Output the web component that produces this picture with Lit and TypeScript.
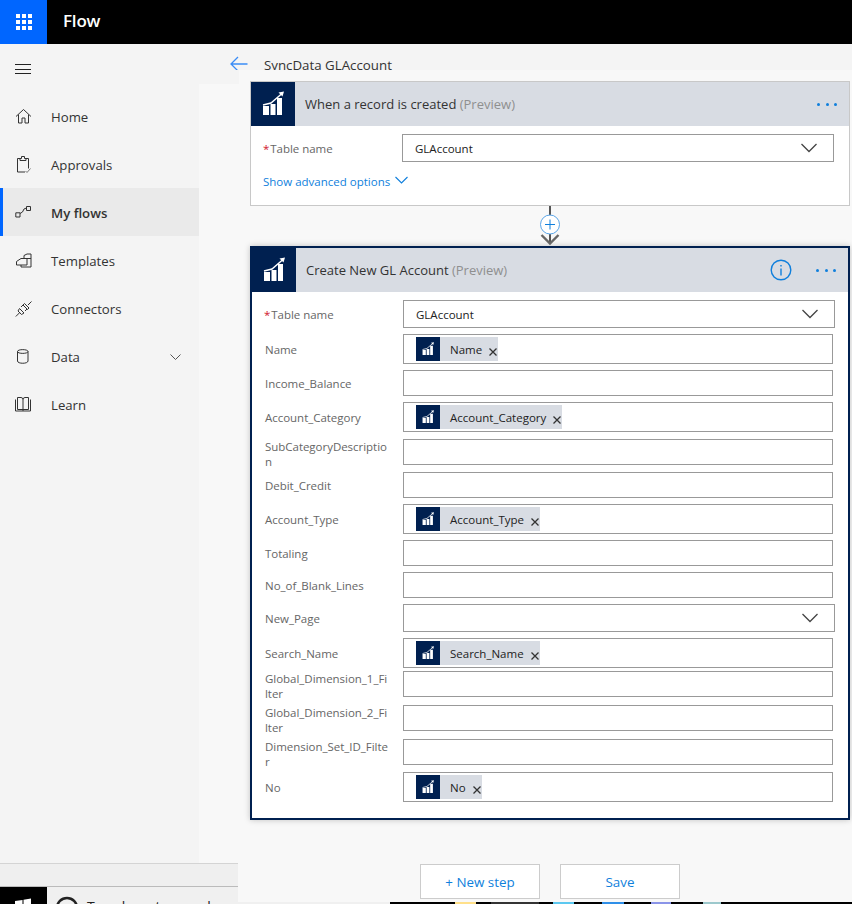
import { LitElement, html, css, svg } from "lit";
import { customElement } from "lit/decorators.js";

const navIcons: Record<string, unknown> = {
  home: svg`<path d="M1 8.5 8.5 1.5 16 8.5M3.5 6.5V15H7V10H10V15H13.5V6.5"/>`,
  approvals: svg`<path d="M13.5 12.5V2.5H11M5 2.5H2.5V16H10M5 4.5V2.5H6.5V.5H9.5V2.5H11V4.5Z"/><path d="M10.5 15 12 16.5 15.5 12.5" stroke="#777"/>`,
  flows: svg`<path d="M.8 8.8H5V13H.8ZM11.5 2.5H15.5V6.5H11.5ZM5 9.5 7.5 8 9 5 11.5 4"/>`,
  templates: svg`<path d="M1.5 9.5 6 6.5H9V3.5L12 2H16V15H6V13H1.5ZM9 6.5H12V13H6M12 6.5H16"/>`,
  connectors: svg`<path d="M.8 16.5 4.5 12.8M13 5 16.5 1.5M4.5 8.5 9 13 6.5 14.5 3 11ZM8 5 12 9M9.5 3.5 14 8 12.5 9.5 8 5ZM6 7 8 5M10 11 12 9"/>`,
  data: svg`<path d="M2.5 3.5C2.5 1 13 1 13 3.5V13C13 16 2.5 16 2.5 13ZM2.5 3.5C2.5 6 13 6 13 3.5"/>`,
  learn: svg`<path d="M.5 3.5V15H15.5V3.5M2.5 1.5V13.5H8V15M13.5 1.5V13.5H8M2.5 1.5H6Q8 1.5 8 3.5V13.5M13.5 1.5H10Q8 1.5 8 3.5"/>`,
};

const navItems = [
  { id: "home", label: "Home" },
  { id: "approvals", label: "Approvals" },
  { id: "flows", label: "My flows", active: true },
  { id: "templates", label: "Templates" },
  { id: "connectors", label: "Connectors" },
  { id: "data", label: "Data", more: true },
  { id: "learn", label: "Learn" },
];

type Row = { label: string; h: number; gap: number; chip?: boolean; select?: boolean; value?: string; req?: boolean; two?: boolean };

const rows: Row[] = [
  { label: "Table name", h: 28, gap: 8, select: true, value: "GLAccount", req: true },
  { label: "Name", h: 30, gap: 6, chip: true },
  { label: "Income_Balance", h: 26, gap: 6 },
  { label: "Account_Category", h: 30, gap: 6, chip: true },
  { label: "SubCategoryDescriptio\nn", h: 26, gap: 7, two: true },
  { label: "Debit_Credit", h: 26, gap: 7 },
  { label: "Account_Type", h: 30, gap: 6, chip: true },
  { label: "Totaling", h: 26, gap: 6 },
  { label: "No_of_Blank_Lines", h: 26, gap: 6 },
  { label: "New_Page", h: 28, gap: 6, select: true },
  { label: "Search_Name", h: 30, gap: 6, chip: true },
  { label: "Global_Dimension_1_Fi\nlter", h: 26, gap: 3, two: true },
  { label: "Global_Dimension_2_Fi\nlter", h: 26, gap: 8, two: true },
  { label: "Dimension_Set_ID_Filte\nr", h: 26, gap: 8, two: true },
  { label: "No", h: 30, gap: 7, chip: true },
];

const osSegments = [
  { w: 152, c: "#f0f0f0" }, { w: 65, c: "#000" }, { w: 21, c: "#ffe08a" }, { w: 15, c: "#000" },
  { w: 48, c: "#333" }, { w: 14, c: "#000" }, { w: 21, c: "#5cc8f0" }, { w: 28, c: "#000" },
  { w: 22, c: "#2f8fe8" }, { w: 27, c: "#000" }, { w: 20, c: "#8a94e8" }, { w: 32, c: "#000" },
  { w: 18, c: "#9cc8cc" }, { w: 131, c: "#000" },
];

const chartIcon = svg`<path d="M12 24H18V33H12ZM19.5 22H24.5V33H19.5ZM26 16H31V33H26Z" fill="#fff"/><path d="M12 23 20 21 31 11.5" fill="none" stroke="#fff" stroke-width="1.4"/><path d="M33 9.5 27.5 10.5 31.5 14.5Z" fill="#fff"/>`;

@customElement("app-root")
export class AppRoot extends LitElement {
  static styles = css`
    :host { display: block; position: relative; width: 852px; height: 904px; overflow: hidden; background: #f8f8f8;
      font-family: "Open Sans", "Noto Sans", sans-serif; color: #333; }
    * { box-sizing: border-box; }
    .top { height: 44px; background: #000; display: flex; align-items: center; color: #fff; }
    .waffle { width: 47px; height: 44px; background: #0066ff; display: flex; align-items: center; justify-content: center; }
    .waffle-grid { display: grid; grid-template-columns: repeat(3, 4px); grid-auto-rows: 4px; gap: 2px; }
    .waffle-grid i { background: #fff; display: block; }
    .brand { margin: 0 0 3px 16px; font-size: 17px; font-weight: 600; letter-spacing: -0.2px; }
    .body { display: flex; height: 860px; }
    .side { width: 199px; flex: none; background: #f4f4f4; }
    .burger { height: 48px; padding: 20px 0 0 15px; }
    .burger i { display: block; width: 16px; height: 1px; background: #222; margin-bottom: 3.5px; }
    .nav { display: flex; align-items: center; height: 48px; padding: 2px 0 0 15px; font-size: 13.2px; color: #333; }
    .nav svg { width: 18px; height: 18px; flex: none; margin-right: 18px; fill: none; stroke: #333; stroke-width: 1; }
    .nav.active { background: #eaeaea; border-left: 3px solid #0066ff; padding-left: 12px; font-weight: 600; }
    .nav .more { margin-left: auto; margin-right: 18px; width: 11px; height: 6px; stroke-width: 1; stroke: #555; }
    .main { flex: 1; min-width: 0; position: relative; }
    .hdr { height: 26px; background: #f4f4f4; overflow: hidden; display: flex; align-items: flex-start; padding: 11px 0 0 31px; position: relative; }
    .notch { position: absolute; left: 0; top: 26px; width: 40px; height: 14px; background: #f4f4f4; }
    .back { width: 18px; height: 16px; fill: none; stroke: #3a8cf5; stroke-width: 1.3; margin-top: 1px; margin-right: 16px; flex: none; }
    .title { font-size: 13.3px; line-height: 20px; color: #333; }
    .canvas { width: 600px; margin-left: 51px; padding-top: 11px; }
    .card { background: #fff; border: 1px solid #c8c8c8; }
    .card.c1 { height: 125px; }
    .card.c2 { height: 574px; border: 2px solid #002050; box-shadow: 0 0 6px rgba(0,0,0,.22); }
    .head { height: 44px; background: #d8dce3; display: flex; align-items: center; }
    .head-ic { width: 44px; height: 44px; background: #002050; flex: none; }
    .head-ic svg { width: 44px; height: 44px; display: block; }
    .head-t { margin-left: 10px; font-size: 13px; color: #333; flex: 1; }
    .head-t span { color: #8f8f8f; }
    .dots { display: flex; gap: 5.3px; margin-right: 12px; }
    .dots i { width: 3px; height: 3px; border-radius: 50%; background: #0f7fdc; display: block; }
    .info { width: 22px; height: 22px; margin-right: 24px; fill: none; stroke: #0f7fdc; stroke-width: 1.4; }
    .row { display: flex; align-items: center; padding-left: 13px; }
    .lab { width: 138px; flex: none; font-size: 11.5px; line-height: 15px; letter-spacing: -0.03px; color: #666; white-space: pre-line; }
    .lab.two { height: 26px; }
    .lab.req { margin-left: -1px; width: 139px; }
    .lab b { color: #d0142c; font-weight: 400; margin-right: 1px; }
    .inp { border: 1px solid #999; background: #fff; display: flex; align-items: center; font-size: 11.5px; color: #222; padding-left: 12px; width: 430px; position: relative; }
    .inp.sel { width: 432px; }
    .chev { position: absolute; right: 16px; top: 8px; width: 16px; height: 10px; fill: none; stroke: #444; stroke-width: 1.3; }
    .chip { display: flex; align-items: center; height: 24px; background: #d8dce3; }
    .chip-ic { width: 24px; height: 24px; background: #002050; flex: none; margin-right: 10px; }
    .chip-ic svg { width: 24px; height: 24px; display: block; }
    .chip-t { font-size: 11.5px; color: #222; }
    .chip-x { width: 8px; height: 8px; margin: 6px 1px 0 7px; fill: none; stroke: #333; stroke-width: 1.3; }
    .adv { display: flex; align-items: center; padding-left: 12px; margin-top: 12px; font-size: 11.5px; color: #0f7fdc; }
    .adv svg { width: 13px; height: 8px; margin: -3px 0 0 5px; fill: none; stroke: #0f7fdc; stroke-width: 1.1; }
    .c1 .row { margin-top: 8px; }
    .c1 .inp { width: 432px; }
    .conn { height: 40px; display: block; margin: 0 auto; width: 40px; }
    .btns { display: flex; justify-content: center; gap: 20px; margin-top: 44px; }
    .btn { width: 120px; height: 35px; background: #fff; border: 1px solid #ccc; color: #0f7fdc; font-size: 13.4px; display: flex; align-items: center; justify-content: center; }
    .dock { position: absolute; left: 0; bottom: 0; width: 238px; height: 41px; background: #efefef; border-top: 1px solid #d4d4d4; }
    .search { margin-top: 22px; height: 18px; border-top: 1px solid #bbb; background: #f0f0f0; display: flex; overflow: hidden; }
    .win { width: 47px; height: 18px; background: #000; flex: none; padding: 11px 0 0 15px; }
    .win svg { width: 16px; height: 16px; display: block; fill: #fff; }
    .lens { width: 24px; height: 24px; margin: 9px 0 0 8px; flex: none; fill: none; stroke: #222; stroke-width: 2.6; }
    .ph { font-size: 14px; line-height: 18px; margin: 11px 0 0 8px; color: #222; white-space: nowrap; }
    .os { position: absolute; left: 238px; bottom: 0; height: 2px; display: flex; width: 614px; }
    .os i { display: block; height: 2px; flex: none; }
  `;

  private chip(label: string) {
    return html`<div class="chip">
      <div class="chip-ic"><svg viewBox="0 0 44 44">${chartIcon}</svg></div>
      <span class="chip-t">${label}</span>
      <svg class="chip-x" viewBox="0 0 8 8"><path d="M.5.5 7.5 7.5M7.5.5.5 7.5"/></svg>
    </div>`;
  }

  private chevron() {
    return html`<svg class="chev" viewBox="0 0 16 10"><path d="M.5 1 8 8.5 15.5 1"/></svg>`;
  }

  private renderRow(r: Row) {
    const name = r.label.replace("\n", "");
    return html`<div class="row" style="margin-top:${r.gap}px">
      <div class="lab ${r.two ? "two" : ""} ${r.req ? "req" : ""}">${r.req ? html`<b>*</b>` : ""}${r.label}</div>
      <div class="inp ${r.select ? "sel" : ""}" style="height:${r.h}px">
        ${r.chip ? this.chip(name) : r.value ?? ""}
        ${r.select ? this.chevron() : ""}
      </div>
    </div>`;
  }

  render() {
    return html`
      <div class="top">
        <div class="waffle"><div class="waffle-grid">${Array.from({ length: 9 }, () => html`<i></i>`)}</div></div>
        <div class="brand">Flow</div>
      </div>
      <div class="body">
        <aside class="side">
          <div class="burger"><i></i><i></i><i></i></div>
          ${navItems.map(
            (n) => html`<div class="nav ${n.active ? "active" : ""}">
              <svg viewBox="0 0 18 18">${navIcons[n.id]}</svg>
              <span>${n.label}</span>
              ${n.more ? html`<svg class="more" viewBox="0 0 11 6"><path d="M.5.5 5.5 5.5 10.5.5"/></svg>` : ""}
            </div>`
          )}
        </aside>
        <main class="main">
          <div class="hdr">
            <svg class="back" viewBox="0 0 18 16"><path d="M8 1 1 8 8 15M1 8H17.5"/></svg>
            <div class="title">SyncData GLAccount</div>
          </div>
          <div class="notch"></div>
          <div class="canvas">
            <section class="card c1">
              <div class="head">
                <div class="head-ic"><svg viewBox="0 0 44 44">${chartIcon}</svg></div>
                <div class="head-t">When a record is created <span>(Preview)</span></div>
                <div class="dots"><i></i><i></i><i></i></div>
              </div>
              <div class="row">
                <div class="lab req"><b>*</b>Table name</div>
                <div class="inp" style="height:28px">GLAccount${this.chevron()}</div>
              </div>
              <div class="adv">Show advanced options
                <svg viewBox="0 0 13 8"><path d="M.5 1 6.5 7 12.5 1"/></svg>
              </div>
            </section>
            <svg class="conn" viewBox="0 0 40 40">
              <path d="M20 0V10M20 28V38" stroke="#555" stroke-width="2" fill="none"/>
              <path d="M11.5 29 20 37.5 28.5 29" stroke="#666" stroke-width="2.4" fill="none"/>
              <circle cx="20" cy="18.5" r="9.5" fill="#fff" stroke="#5aa5e8" stroke-width="1"/>
              <path d="M20 13.5V23.5M15 18.5H25" stroke="#0f7fdc" stroke-width="1" fill="none"/>
            </svg>
            <section class="card c2">
              <div class="head">
                <div class="head-ic"><svg viewBox="0 0 44 44">${chartIcon}</svg></div>
                <div class="head-t">Create New GL Account <span>(Preview)</span></div>
                <svg class="info" viewBox="0 0 22 22"><circle cx="11" cy="11" r="9.8"/><path d="M11 9.5V16.5M11 6V7.6"/></svg>
                <div class="dots"><i></i><i></i><i></i></div>
              </div>
              ${rows.map((r) => this.renderRow(r))}
            </section>
            <div class="btns">
              <div class="btn">+ New step</div>
              <div class="btn">Save</div>
            </div>
          </div>
        </main>
      </div>
      <div class="dock">
        <div class="search">
          <div class="win"><svg viewBox="0 0 16 16"><path d="M0 3 7.5 2V8H0ZM8.5 1.8 16 .5V8H8.5Z"/></svg></div>
          <svg class="lens" viewBox="0 0 24 24"><circle cx="12" cy="12" r="10"/></svg>
          <div class="ph">Type here to search</div>
        </div>
      </div>
      <div class="os">${osSegments.map((s) => html`<i style="width:${s.w}px;background:${s.c}"></i>`)}</div>
    `;
  }
}
